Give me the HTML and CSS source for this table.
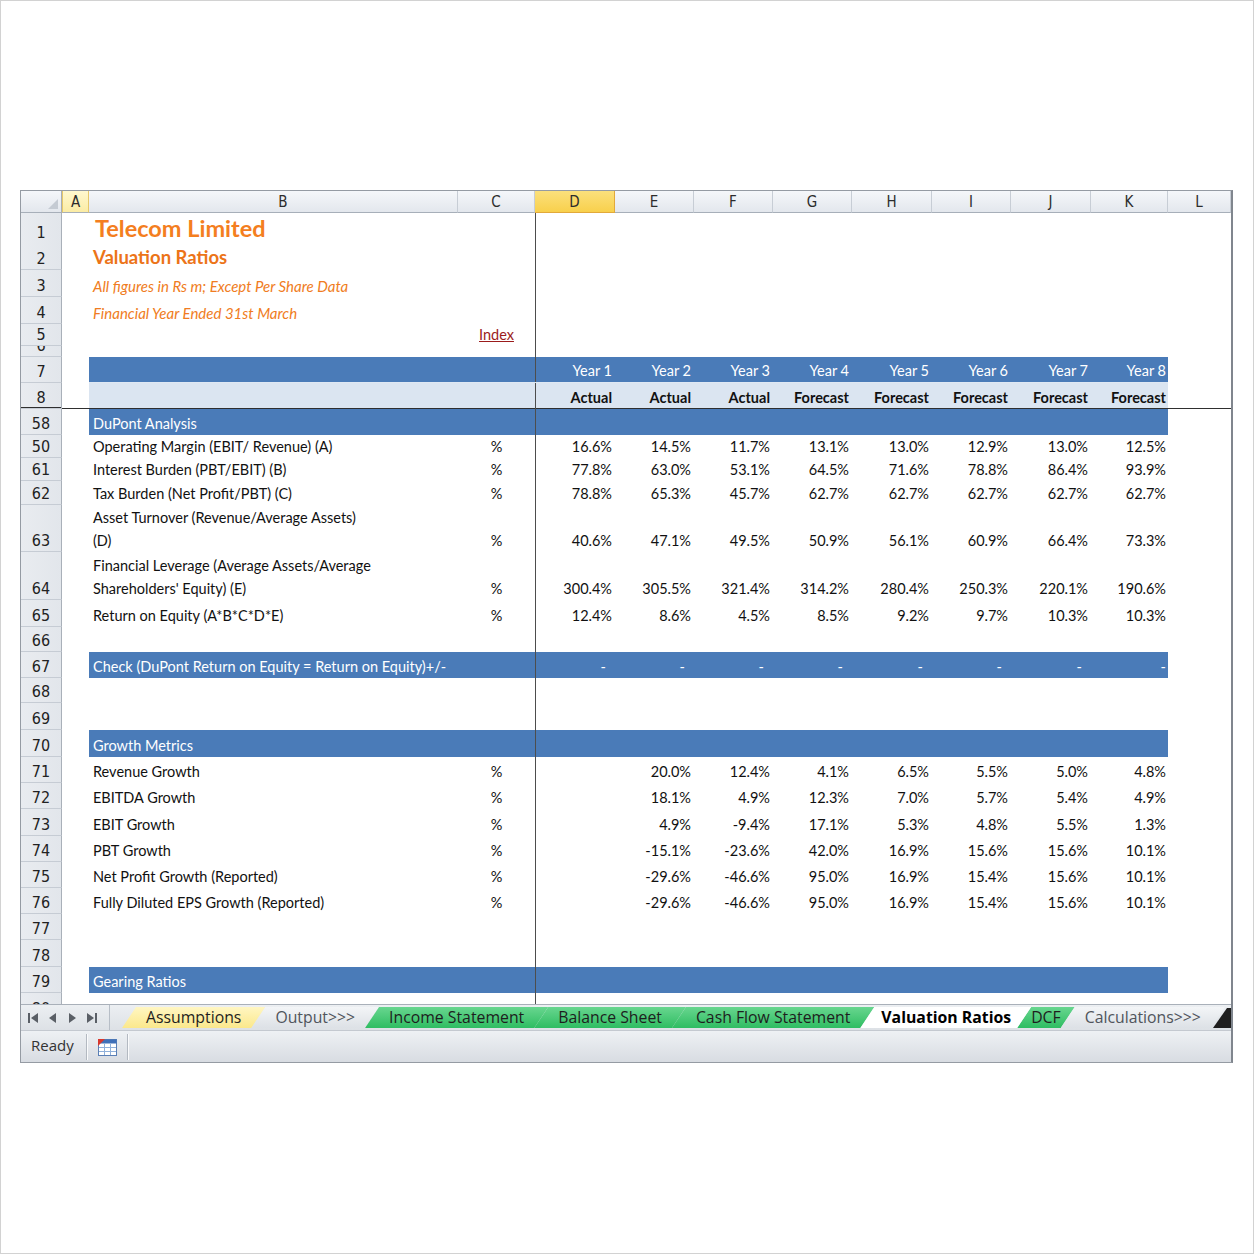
FILE: index.html
```html
<!DOCTYPE html>
<html>
<head>
<meta charset="utf-8">
<title>Telecom Limited - Valuation Ratios</title>
<link rel="stylesheet" href="styles.css">
</head>
<body>
<div class="page">
<div class="frame">
  <div class="colhdr">
    <div class="corner"></div>
    <div class="selA">A</div>
    <div class="colB">B</div>
    <div>C</div>
    <div class="selD">D</div>
    <div>E</div>
    <div>F</div>
    <div>G</div>
    <div>H</div>
    <div>I</div>
    <div>J</div>
    <div>K</div>
    <div>L</div>
  </div>
  <div class="sheet">
    <div class="r h30"><div class="rh">1</div><div></div><div class="lbl t1">Telecom Limited</div><div></div><div></div><div></div><div></div><div></div><div></div><div></div><div></div><div></div><div></div></div>
    <div class="r h27"><div class="rh">2</div><div></div><div class="lbl t2">Valuation Ratios</div><div></div><div></div><div></div><div></div><div></div><div></div><div></div><div></div><div></div><div></div></div>
    <div class="r h27"><div class="rh">3</div><div></div><div class="lbl t3">All figures in Rs m; Except Per Share Data</div><div></div><div></div><div></div><div></div><div></div><div></div><div></div><div></div><div></div><div></div></div>
    <div class="r h27"><div class="rh">4</div><div></div><div class="lbl t3">Financial Year Ended 31st March</div><div></div><div></div><div></div><div></div><div></div><div></div><div></div><div></div><div></div><div></div></div>
    <div class="r h22"><div class="rh">5</div><div></div><div></div><div class="u"><span class="link">Index</span></div><div></div><div></div><div></div><div></div><div></div><div></div><div></div><div></div><div></div></div>
    <div class="r h11"><div class="rh">6</div><div></div><div></div><div></div><div></div><div></div><div></div><div></div><div></div><div></div><div></div><div></div><div></div></div>
    <div class="r h26 blue yr"><div class="rh">7</div><div></div><div></div><div></div><div class="n">Year 1</div><div class="n">Year 2</div><div class="n">Year 3</div><div class="n">Year 4</div><div class="n">Year 5</div><div class="n">Year 6</div><div class="n">Year 7</div><div class="n">Year 8</div><div></div></div>
    <div class="r h26 light split"><div class="rh">8</div><div></div><div></div><div></div><div class="n b">Actual</div><div class="n b">Actual</div><div class="n b">Actual</div><div class="n b">Forecast</div><div class="n b">Forecast</div><div class="n b">Forecast</div><div class="n b">Forecast</div><div class="n b">Forecast</div><div></div></div>

    <div class="r h26 blue"><div class="rh">58</div><div></div><div class="lbl">DuPont Analysis</div><div></div><div></div><div></div><div></div><div></div><div></div><div></div><div></div><div></div><div></div></div>
    <div class="r h23"><div class="rh">50</div><div></div><div class="lbl">Operating Margin (EBIT/ Revenue) (A)</div><div class="u">%</div><div class="n">16.6%</div><div class="n">14.5%</div><div class="n">11.7%</div><div class="n">13.1%</div><div class="n">13.0%</div><div class="n">12.9%</div><div class="n">13.0%</div><div class="n">12.5%</div><div></div></div>
    <div class="r h23"><div class="rh">61</div><div></div><div class="lbl">Interest Burden (PBT/EBIT) (B)</div><div class="u">%</div><div class="n">77.8%</div><div class="n">63.0%</div><div class="n">53.1%</div><div class="n">64.5%</div><div class="n">71.6%</div><div class="n">78.8%</div><div class="n">86.4%</div><div class="n">93.9%</div><div></div></div>
    <div class="r h24"><div class="rh">62</div><div></div><div class="lbl">Tax Burden (Net Profit/PBT) (C)</div><div class="u">%</div><div class="n">78.8%</div><div class="n">65.3%</div><div class="n">45.7%</div><div class="n">62.7%</div><div class="n">62.7%</div><div class="n">62.7%</div><div class="n">62.7%</div><div class="n">62.7%</div><div></div></div>
    <div class="r h47"><div class="rh">63</div><div></div><div class="lbl wrap">Asset Turnover (Revenue/Average Assets)<br>(D)</div><div class="u">%</div><div class="n">40.6%</div><div class="n">47.1%</div><div class="n">49.5%</div><div class="n">50.9%</div><div class="n">56.1%</div><div class="n">60.9%</div><div class="n">66.4%</div><div class="n">73.3%</div><div></div></div>
    <div class="r h48"><div class="rh">64</div><div></div><div class="lbl wrap">Financial Leverage (Average Assets/Average<br>Shareholders' Equity) (E)</div><div class="u">%</div><div class="n">300.4%</div><div class="n">305.5%</div><div class="n">321.4%</div><div class="n">314.2%</div><div class="n">280.4%</div><div class="n">250.3%</div><div class="n">220.1%</div><div class="n">190.6%</div><div></div></div>
    <div class="r h27"><div class="rh">65</div><div></div><div class="lbl">Return on Equity (A*B*C*D*E)</div><div class="u">%</div><div class="n">12.4%</div><div class="n">8.6%</div><div class="n">4.5%</div><div class="n">8.5%</div><div class="n">9.2%</div><div class="n">9.7%</div><div class="n">10.3%</div><div class="n">10.3%</div><div></div></div>
    <div class="r h25"><div class="rh">66</div><div></div><div></div><div></div><div></div><div></div><div></div><div></div><div></div><div></div><div></div><div></div><div></div></div>
    <div class="r h26 blue"><div class="rh">67</div><div></div><div class="lbl">Check (DuPont Return on Equity = Return on Equity)+/-</div><div></div><div class="n d">-</div><div class="n d">-</div><div class="n d">-</div><div class="n d">-</div><div class="n d">-</div><div class="n d">-</div><div class="n d">-</div><div class="n d">-</div><div></div></div>
    <div class="r h25"><div class="rh">68</div><div></div><div></div><div></div><div></div><div></div><div></div><div></div><div></div><div></div><div></div><div></div><div></div></div>
    <div class="r h27"><div class="rh">69</div><div></div><div></div><div></div><div></div><div></div><div></div><div></div><div></div><div></div><div></div><div></div><div></div></div>
    <div class="r h27 blue"><div class="rh">70</div><div></div><div class="lbl">Growth Metrics</div><div></div><div></div><div></div><div></div><div></div><div></div><div></div><div></div><div></div><div></div></div>
    <div class="r h26"><div class="rh">71</div><div></div><div class="lbl">Revenue Growth</div><div class="u">%</div><div class="n"></div><div class="n">20.0%</div><div class="n">12.4%</div><div class="n">4.1%</div><div class="n">6.5%</div><div class="n">5.5%</div><div class="n">5.0%</div><div class="n">4.8%</div><div></div></div>
    <div class="r h26"><div class="rh">72</div><div></div><div class="lbl">EBITDA Growth</div><div class="u">%</div><div class="n"></div><div class="n">18.1%</div><div class="n">4.9%</div><div class="n">12.3%</div><div class="n">7.0%</div><div class="n">5.7%</div><div class="n">5.4%</div><div class="n">4.9%</div><div></div></div>
    <div class="r h27"><div class="rh">73</div><div></div><div class="lbl">EBIT Growth</div><div class="u">%</div><div class="n"></div><div class="n">4.9%</div><div class="n">-9.4%</div><div class="n">17.1%</div><div class="n">5.3%</div><div class="n">4.8%</div><div class="n">5.5%</div><div class="n">1.3%</div><div></div></div>
    <div class="r h26"><div class="rh">74</div><div></div><div class="lbl">PBT Growth</div><div class="u">%</div><div class="n"></div><div class="n">-15.1%</div><div class="n">-23.6%</div><div class="n">42.0%</div><div class="n">16.9%</div><div class="n">15.6%</div><div class="n">15.6%</div><div class="n">10.1%</div><div></div></div>
    <div class="r h26"><div class="rh">75</div><div></div><div class="lbl">Net Profit Growth (Reported)</div><div class="u">%</div><div class="n"></div><div class="n">-29.6%</div><div class="n">-46.6%</div><div class="n">95.0%</div><div class="n">16.9%</div><div class="n">15.4%</div><div class="n">15.6%</div><div class="n">10.1%</div><div></div></div>
    <div class="r h26"><div class="rh">76</div><div></div><div class="lbl">Fully Diluted EPS Growth (Reported)</div><div class="u">%</div><div class="n"></div><div class="n">-29.6%</div><div class="n">-46.6%</div><div class="n">95.0%</div><div class="n">16.9%</div><div class="n">15.4%</div><div class="n">15.6%</div><div class="n">10.1%</div><div></div></div>
    <div class="r h26"><div class="rh">77</div><div></div><div></div><div></div><div></div><div></div><div></div><div></div><div></div><div></div><div></div><div></div><div></div></div>
    <div class="r h27"><div class="rh">78</div><div></div><div></div><div></div><div></div><div></div><div></div><div></div><div></div><div></div><div></div><div></div><div></div></div>
    <div class="r h26 blue"><div class="rh">79</div><div></div><div class="lbl">Gearing Ratios</div><div></div><div></div><div></div><div></div><div></div><div></div><div></div><div></div><div></div><div></div></div>
    <div class="r h26"><div class="rh top">80</div><div></div><div></div><div></div><div></div><div></div><div></div><div></div><div></div><div></div><div></div><div></div><div></div></div>
  </div>

  <div class="tabbar">
    <div class="nav">
      <svg width="12" height="14" viewBox="0 0 12 14"><rect x="1" y="2" width="2" height="10" fill="#5a5f66"/><path d="M11 2 L4 7 L11 12 Z" fill="#5a5f66"/></svg>
      <svg width="10" height="14" viewBox="0 0 10 14"><path d="M8 2 L1 7 L8 12 Z" fill="#5a5f66"/></svg>
      <svg width="10" height="14" viewBox="0 0 10 14"><path d="M2 2 L9 7 L2 12 Z" fill="#5a5f66"/></svg>
      <svg width="12" height="14" viewBox="0 0 12 14"><path d="M1 2 L8 7 L1 12 Z" fill="#5a5f66"/><rect x="9" y="2" width="2" height="10" fill="#5a5f66"/></svg>
    </div>
    <div class="tabs">
      <div class="tab yellow">Assumptions</div>
      <div class="tab grey">Output&gt;&gt;&gt;</div>
      <div class="tab green">Income Statement</div>
      <div class="tab green">Balance Sheet</div>
      <div class="tab green">Cash Flow Statement</div>
      <div class="tab active">Valuation Ratios</div>
      <div class="tab green narrow">DCF</div>
      <div class="tab grey">Calculations&gt;&gt;&gt;</div>
    </div>
    <div class="wedge"></div>
  </div>

  <div class="status">
    <div class="ready">Ready</div>
    <div class="sep"></div>
    <div class="sicon">
      <svg width="21" height="21" viewBox="0 0 21 21">
        <rect x="1.5" y="2.5" width="18" height="16" fill="#fff" stroke="#5a7fb5"/>
        <rect x="1.5" y="2.5" width="18" height="4" fill="#3f70b8"/>
        <path d="M2 10.5 H19 M2 14.5 H19 M7.5 7 V18 M13.5 7 V18" stroke="#8fb0da" stroke-width="1"/>
        <path d="M1 2 H8 L1 9 Z" fill="#d8392f"/>
      </svg>
    </div>
    <div class="sep"></div>
  </div>
</div>
</div>
</body>
</html>
```
FILE: styles.css
```css
* { box-sizing: border-box; margin: 0; padding: 0; }

html, body { background: #fff; }

body {
  width: 1254px;
  height: 1254px;
  border: 1px solid #d2d2d2;
  font-family: "Lato", "Open Sans", sans-serif;
  overflow: hidden;
}

.page {
  padding: 189px 0 0 19px;
}

.frame {
  width: 1213px;
  border: 1px solid #959ba3;
  border-right: 2px solid #80868e;
  background: #fff;
}

/* ---------- column header ---------- */
.colhdr {
  display: grid;
  grid-template-columns: 41px 27px 369px 77px 80px 79px 79px 79px 80px 79px 80px 77px 63px;
  height: 22px;
}

.colhdr > div {
  display: flex;
  align-items: center;
  justify-content: center;
  padding-top: 1px;
  background: linear-gradient(#f5f7fa, #e3e7ed);
  border-right: 1px solid #c7cdd5;
  border-bottom: 1px solid #a7afb9;
  font-family: "DejaVu Sans Condensed", "DejaVu Sans", sans-serif;
  font-size: 15px;
  color: #2c2c2c;
}

.colhdr > .colB { padding-left: 20px; }

.colhdr .corner {
  position: relative;
  border-right: 1px solid #a7afb9;
}

.colhdr .corner::after {
  content: "";
  position: absolute;
  right: 3px;
  bottom: 3px;
  border-style: solid;
  border-width: 0 0 10px 10px;
  border-color: transparent transparent #c5cbd3 transparent;
}

.colhdr .selA {
  background: linear-gradient(#fff8cf, #fbeca4);
  border-right: 1px solid #e6c86a;
  border-left: 1px solid #e6c86a;
}

.colhdr .selD {
  background: linear-gradient(#fbe07c, #f8d04c);
  border-right: 1px solid #e2a93a;
  border-bottom: 1px solid #e2a93a;
}

/* ---------- sheet ---------- */
.sheet {
  height: 791px;
  overflow: hidden;
}

.r {
  display: grid;
  grid-template-columns: 41px 27px 369px 77px 80px 79px 79px 79px 80px 79px 80px 77px 63px;
}

.h11 { height: 11px; }
.h22 { height: 22px; }
.h23 { height: 23px; }
.h24 { height: 24px; }
.h25 { height: 25px; }
.h26 { height: 26px; }
.h27 { height: 27px; }
.h30 { height: 30px; }
.h47 { height: 47px; }
.h48 { height: 48px; }

.r > div {
  display: flex;
  align-items: flex-end;
  white-space: nowrap;
  font-size: 14.5px;
  line-height: 22px;
  color: #111;
  min-width: 0;
}

.r > .rh {
  justify-content: center;
  overflow: hidden;
  background: linear-gradient(90deg, #e9ecf0, #e2e6eb);
  border-bottom: 1px solid #c6ccd4;
  border-right: 1px solid #a9b0b9;
  font-family: "DejaVu Sans Condensed", "DejaVu Sans", sans-serif;
  font-size: 16px;
  color: #222;
  line-height: 21px;
}

.r > .rh.top { align-items: flex-start; padding-top: 5px; }

/* frozen pane divider */
.r > div:nth-child(5) { box-shadow: inset 1px 0 0 #4d4d4d; }
.r.split > div { box-shadow: inset 0 -1px 0 #2f2f2f; }
.r.split > div:nth-child(5) { box-shadow: inset 1px 0 0 #4d4d4d, inset 0 -1px 0 #2f2f2f; }

.r > .lbl { padding-left: 4px; overflow: visible; }
.r > .n { justify-content: flex-end; padding-right: 3px; }
.r > div:nth-child(12).n { padding-right: 2px; }
.r > .u { justify-content: center; }
.r > .b { font-weight: 700; }
.r > .d { padding-right: 9px; }

.r > .wrap { line-height: 23px; white-space: normal; }

/* section bands */
.r.blue > div:nth-child(n+3):nth-child(-n+12) {
  background: #4a7bb8;
  color: #fff;
}
.r.blue.yr > div:nth-child(n+3):nth-child(-n+12) {
  border-bottom: 1px solid #dfe8f3;
  line-height: 23px;
}
.r.light > div:nth-child(n+3):nth-child(-n+12) {
  background: #dbe5f1;
}

/* titles */
.r > .t1 {
  font-size: 23.5px;
  font-weight: 700;
  color: #f47e20;
  padding-left: 6px;
  line-height: 31px;
}
.r > .t2 {
  font-size: 18.5px;
  font-weight: 700;
  color: #ec7418;
  line-height: 25px;
}
.r > .t3 {
  font-style: italic;
  font-size: 15px;
  color: #f07c22;
  line-height: 22px;
}
.link {
  color: #9b1b1b;
  text-decoration: underline;
}

/* ---------- tab bar ---------- */
.tabbar {
  height: 26px;
  display: flex;
  align-items: flex-end;
  background: linear-gradient(#eceff2, #dde1e6);
  border-top: 1px solid #a9b0b9;
  position: relative;
}

.nav {
  width: 89px;
  height: 100%;
  display: flex;
  align-items: center;
  gap: 9px;
  padding-left: 6px;
  border-right: 1px solid #b7bec7;
}

.tabs {
  display: flex;
  align-items: flex-end;
  margin-left: 12px;
  height: 21px;
  margin-bottom: 2px;
}

.tab {
  height: 21px;
  display: flex;
  align-items: center;
  padding: 0 24px 1px 24px;
  margin-right: -14px;
  clip-path: polygon(0 100%, 14px 0, 100% 0, calc(100% - 14px) 100%);
  font-family: "Open Sans", "Lato", sans-serif;
  font-size: 15.8px;
  color: #1e1e1e;
  white-space: nowrap;
}

.tab.narrow { padding: 0 14px 1px 14px; }

.tab.yellow { background: linear-gradient(#fff6c2, #fbe88c); }
.tab.grey { background: linear-gradient(#f3f5f7, #dde1e6); color: #50555c; }
.tab.green { background: linear-gradient(#68d68f, #2fbd62); }
.tab.active { background: #fff; font-weight: 700; color: #000; position: relative; z-index: 1; padding: 0 20px 1px 21px; }

.wedge {
  position: absolute;
  right: 0;
  bottom: 2px;
  width: 18px;
  height: 20px;
  background: #1f1f1f;
  clip-path: polygon(0 100%, 14px 0, 100% 0, 100% 100%);
}

/* ---------- status bar ---------- */
.status {
  height: 32px;
  display: flex;
  align-items: center;
  background: linear-gradient(#eef1f4, #d8dce2);
  border-top: 1px solid #c4c9d0;
}

.ready {
  padding-left: 10px;
  padding-bottom: 3px;
  width: 65px;
  font-family: "Open Sans", "Lato", sans-serif;
  font-size: 15px;
  color: #333;
}

.sep {
  width: 2px;
  height: 26px;
  border-left: 1px solid #b3b9c1;
  border-right: 1px solid #fafbfc;
}

.sicon {
  width: 39px;
  display: flex;
  justify-content: center;
  padding-top: 1px;
}
```
